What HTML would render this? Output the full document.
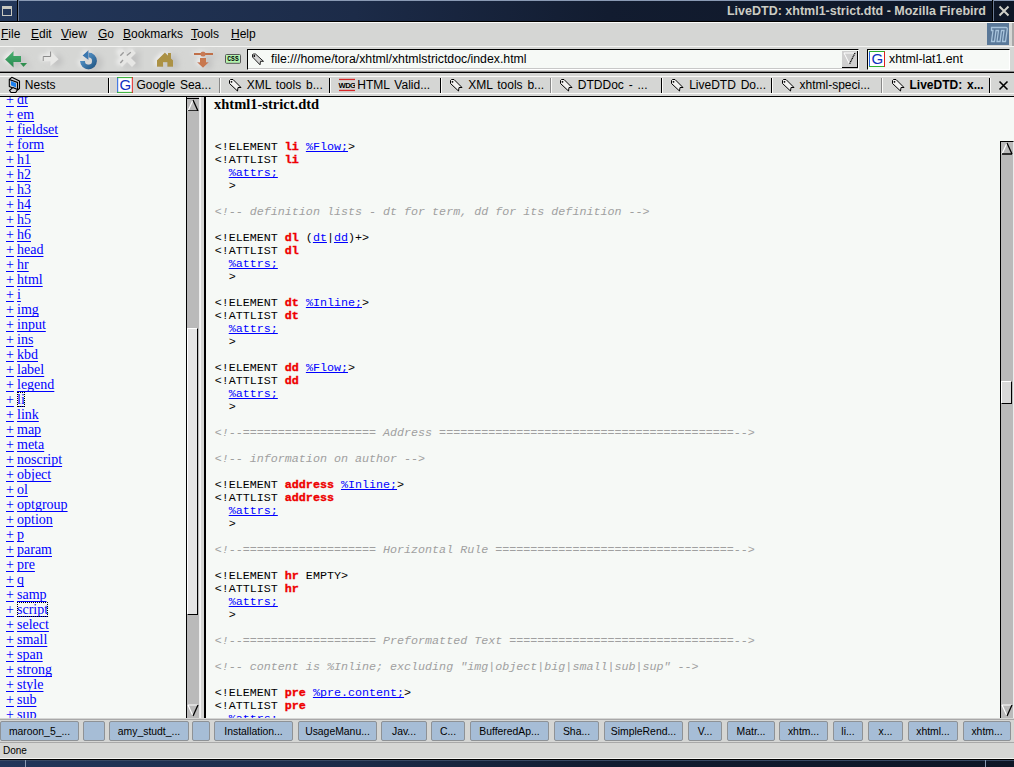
<!DOCTYPE html>
<html><head><meta charset="utf-8">
<style>
*{box-sizing:border-box}
html,body{margin:0;padding:0;width:1014px;height:767px;overflow:hidden;background:#d5d6d4;font-family:"Liberation Sans",sans-serif}
.a{position:absolute}
#title{left:0;top:0;width:1014px;height:22px;background:linear-gradient(90deg,#23375a 0%,#1c2b48 35%,#121c30 60%,#0e1626 100%);border-top:1px solid #8a9ab4;border-bottom:1px solid #000}
#ttext{right:28px;top:3px;color:#ccccc4;font:bold 12.5px "Liberation Sans",sans-serif;white-space:nowrap}
#menubar{left:0;top:22px;width:1014px;height:24px;background:#d5d6d4;border-top:1px solid #fafaf8}
.menu{top:4px;font-size:12px;color:#000;white-space:nowrap}
.menu u{text-decoration:underline;text-underline-offset:1px}
#toolbar{left:0;top:46px;width:1014px;height:26px;background:#d5d6d4;border-top:1px solid #f4f4f2;border-bottom:1px solid #888}
#tabbar{left:0;top:72px;width:1014px;height:25px;background:#d5d6d4;border-top:1px solid #000;border-bottom:1px solid #000}
#tabhl{left:0;top:76px;width:990px;height:1px;background:#fafaf8}
#tabhl2{left:0;top:93px;width:1014px;height:1px;background:#fafaf8}
.ti{top:74px;width:22px;height:22px}
.tt{top:78px;font-size:12px;white-space:nowrap;color:#000;word-spacing:1.5px}
.tsep{top:78px;width:1px;height:15px}
.tsep.dk{background:#000}
.tsep.lt{background:#888}
.tsep.wh{background:#fafaf8}
#side{left:0;top:97px;width:186px;height:621px;background:#f6f9f6;overflow:hidden}
.sl{position:absolute;left:6px;font:14px "Liberation Serif",serif;color:#0000ff;white-space:nowrap}
.sl span{text-decoration:underline;text-underline-offset:2px;text-decoration-skip-ink:none}
.sl.sn{left:17px}
.sl .foc{outline:1px dotted #000;outline-offset:-1px}
#content{left:206px;top:141px;width:794px;height:577px;background:#f6f9f6;overflow:hidden}
#topframe{left:206px;top:97px;width:808px;height:44px;background:#f6f9f6}
pre{position:absolute;left:8.7px;top:0;margin:0;font:11.7px/13px "Liberation Mono",monospace;color:#000}
pre i{-webkit-text-stroke:0}
pre a{-webkit-text-stroke:0}
pre b{-webkit-text-stroke:.35px #e00}
pre b{color:#ee0000}
pre a{color:#0000ff;text-decoration:underline;text-decoration-skip-ink:none}
pre i{color:#a0a0a0}
#taskbar{left:0;top:719px;width:1014px;height:24px;background:#d5d6d4;border-top:1px solid #a8a8a8;border-bottom:1px solid #a8a8a8}
.tb{top:721px;height:20px;background:#a6bdd6;border:1px solid #8e9296;border-radius:2px;font-size:10.4px;text-align:center;line-height:20px;color:#000;white-space:nowrap}
#status{left:0;top:743px;width:1014px;height:15px;background:#d5d6d4}
#bottom{left:0;top:758px;width:1014px;height:9px;background:linear-gradient(90deg,#22365a 0%,#1c2b48 35%,#121c30 60%,#0e1626 100%);border-top:1px solid #f4f4f2}
#bottom:before{content:"";position:absolute;left:0;top:0;width:1014px;height:1px;background:#000}
#bottom:after{content:"";position:absolute;left:0;top:1px;width:1014px;height:1px;background:#3a4a64}

</style></head><body>
<div id="title" class="a">
  <div class="a" style="left:2px;top:5px;width:10px;height:10px;border:1px solid #c8c8c0;border-top-width:3px"></div>
  <div class="a" style="left:17px;top:-1px;width:1px;height:21px;background:#000"></div>
  <div class="a" style="left:18px;top:-1px;width:1px;height:21px;background:#6a7a94"></div>
  <div id="ttext" class="a">LiveDTD: xhtml1-strict.dtd - Mozilla Firebird</div>
  <div class="a" style="left:992px;top:-1px;width:1px;height:21px;background:#000"></div>
  <div class="a" style="left:993px;top:-1px;width:1px;height:21px;background:#6a7a94"></div>
  <svg class="a" style="left:994px;top:-1px" width="20" height="21" viewBox="0 0 20 21"><path d="M5.5 6.5 L14.5 15.5 M14.5 6.5 L5.5 15.5" stroke="#d0d0c8" stroke-width="2"/></svg>
</div>
<div id="menubar" class="a">
  <div class="a menu" style="left:1px"><u>F</u>ile</div>
  <div class="a menu" style="left:31px"><u>E</u>dit</div>
  <div class="a menu" style="left:61px"><u>V</u>iew</div>
  <div class="a menu" style="left:98px"><u>G</u>o</div>
  <div class="a menu" style="left:123px"><u>B</u>ookmarks</div>
  <div class="a menu" style="left:191px"><u>T</u>ools</div>
  <div class="a menu" style="left:231px"><u>H</u>elp</div>
  <svg class="a" style="left:987px;top:0px" width="22" height="22" viewBox="0 0 22 22"><rect width="22" height="22" fill="#5a7898"/><path d="M4.5 4.5 L19 4.5 Q20.5 4.5 20.2 6.5 L18.5 18.5 L15.5 18.5 L17 7.5 L14.5 7.5 L13 18.5 L10 18.5 L11.5 7.5 L9 7.5 L7.5 18.5 L4.5 18.5 L6 7.5 L4.5 7.5 Z" fill="none" stroke="#a8c4dc" stroke-width="1.3"/></svg>
  <div class="a" style="left:1012px;top:0;width:2px;height:24px;background:#a8a8a8"></div>
</div>
<div id="toolbar" class="a">
  <div class="a" style="left:247px;top:2px;width:612px;height:21px;background:#f6f9f6;border-top:1px solid #000;border-left:1px solid #000;border-bottom:1px solid #fff;border-right:1px solid #fff"></div>
  <div class="a" style="left:248px;top:21px;width:610px;height:1px;background:#c8c8c8"></div>
  <svg class="a" style="left:248px;top:4px" width="20" height="18" viewBox="0 0 20 18"><path d="M4.5 3.5 L4.5 6 L12 13.8 L12.5 10.3 L15.5 10.3 L7.5 3 L5.5 3 Z" fill="#d4d4d4" stroke="#222" stroke-width="1"/><circle cx="6.3" cy="5" r=".9" fill="#000"/></svg>
  <div class="a" style="left:271px;top:5px;font-size:12.3px;white-space:nowrap">file:///home/tora/xhtml/xhtmlstrictdoc/index.html</div>
  <div class="a" style="left:842px;top:4px;width:16px;height:17px;background:#cfcfcf;border-right:1px solid #000;border-bottom:1px solid #000"></div>
  <svg class="a" style="left:842px;top:4px" width="16" height="17" viewBox="0 0 16 17"><path d="M2 2 L7.5 13" stroke="#fff" stroke-width="1"/><path d="M2 2 L13 2" stroke="#fff" stroke-width="1"/><path d="M13 2 L7.5 13" stroke="#000" stroke-width="1.2" stroke-dasharray="1.2 .6"/></svg>
  <div class="a" style="left:867px;top:2px;width:143px;height:21px;background:#f6f9f6;border-top:1px solid #000;border-left:1px solid #000;border-bottom:1px solid #fff;border-right:1px solid #fff"></div>
  <svg class="a" style="left:869px;top:4px" width="16" height="16" viewBox="0 0 16 16"><rect x="0.5" y="0.5" width="15" height="15" fill="#fff"/><path d="M0.5 0 V16" stroke="#2060e0"/><path d="M0 0.5 H16 M0 15.5 H16" stroke="#30b030"/><path d="M15.5 0.5 V16" stroke="#e02020"/><text x="8.3" y="13.3" font-family="Liberation Sans" font-size="15" fill="#1030c0" text-anchor="middle">G</text></svg>
  <div class="a" style="left:889px;top:5px;font-size:12.3px;white-space:nowrap">xhtml-lat1.ent</div>
</div>
<svg class="a" style="left:0;top:46px" width="246" height="25" viewBox="0 46 246 25">
<defs>
<filter id="ds" x="-100%" y="-100%" width="300%" height="300%"><feColorMatrix in="SourceAlpha" type="matrix" values="0 0 0 0 0.5  0 0 0 0 0.5  0 0 0 0 0.5  0 0 0 1 0" result="a"/><feOffset in="a" dx="5" dy="2" result="o"/><feGaussianBlur in="o" stdDeviation="3" result="b"/><feColorMatrix in="SourceAlpha" type="matrix" values="0 0 0 0 1  0 0 0 0 1  0 0 0 0 1  0 0 0 .7 0" result="w"/><feOffset in="w" dx="-2" dy="-1" result="wo"/><feGaussianBlur in="wo" stdDeviation="2" result="wb"/><feMerge><feMergeNode in="wb"/><feMergeNode in="b"/><feMergeNode in="SourceGraphic"/></feMerge></filter>
<linearGradient id="gr" x1="0" y1="0" x2="0" y2="1"><stop offset="0" stop-color="#48b070"/><stop offset="1" stop-color="#2a8a50"/></linearGradient>
<linearGradient id="bl" x1="0" y1="0" x2="1" y2="1"><stop offset="0" stop-color="#5a9ad0"/><stop offset="1" stop-color="#245a88"/></linearGradient>
</defs>
<g filter="url(#ds)">
<path d="M5 59.4 L13.6 51 L13.6 56 L21 56 L21 62 L13.6 62 L13.6 67.5 Z" fill="url(#gr)"/>
<path d="M20 63 L27.2 63 L23.5 67 Z" fill="#2e9050"/>
</g>
<g filter="url(#ds)">
<path d="M43 56.3 L50.4 56.3 L50.4 51.1 L58.6 59.2 L50.4 66.1 L50.4 61.2 L43 61.2 Z" fill="#e8e8e6"/><path d="M43.2 61 L43.2 56.5 L50.6 56.5 L50.6 51.5" fill="none" stroke="#8a8a8a" stroke-width="1"/>
</g>
<g filter="url(#ds)">
<path d="M82.5 61 A6 6 0 1 0 88.5 55" fill="none" stroke="url(#bl)" stroke-width="5"/>
<path d="M88.5 50 L88.5 60 L82.5 55.5 Z" fill="#3a78b0"/>
</g>
<g filter="url(#ds)">
<path d="M122 53 L132 63 M132 53 L122 63" stroke="#e6e6e4" stroke-width="5.5" stroke-linecap="square"/>
<g stroke="#9a9a9a" stroke-width="1.3" fill="none"><path d="M120.3 55.7 L123.7 52.2"/><path d="M126.8 55.5 L130.8 52.3"/><path d="M120.3 63 L123 60"/></g>
</g>
<g filter="url(#ds)">
<path d="M157 60.2 L164.9 52.6 L168 55.5 L168 53 L171 53 L171 58.5 L173 60.2 L173 66.7 L167.3 66.7 L167.3 62.2 L163.1 62.2 L163.1 66.7 L157 66.7 Z" fill="#ac9244"/>
</g>
<g filter="url(#ds)">
<path d="M194 53 L213 53 L213 55 L194 55 Z" fill="#c07048"/>
<circle cx="203" cy="54" r="2.6" fill="#c87a54"/>
<path d="M200 58 L206 58 L206 62.2 L208.8 62.2 L203 67.7 L197 62.2 L200 62.2 Z" fill="#c87850"/>
</g>
<rect x="225.5" y="54.5" width="15" height="8.8" rx="1" fill="#b4f4b0" stroke="#585858"/>
<text x="233" y="61.3" font-family="Liberation Mono" font-weight="bold" font-size="6.3" text-anchor="middle" fill="#000">CSS</text>
</svg>

<div id="tabbar" class="a"></div><div id="tabhl" class="a"></div><div id="tabhl2" class="a"></div>
<svg class="a" style="left:998px;top:80px" width="11" height="11" viewBox="0 0 11 11"><path d="M1.5 1.5 L9.5 9.5 M9.5 1.5 L1.5 9.5" stroke="#000" stroke-width="1.6"/></svg>
<div class="a ti" style="left:0px"><svg width="22" height="22" viewBox="0 0 22 22"><path d="M9.3 5.5 L11.8 3.3 L19.5 7 L19.5 14.5 L17.5 16 L9.3 12.5 Z" fill="#cfcfcf" stroke="#000" stroke-width="1.1" stroke-linejoin="round"/><path d="M9.3 5.5 L17.5 8.5 L17.5 16" fill="none" stroke="#000" stroke-width="1.1"/><path d="M11 7 L16 9.3 L16 13.5 L11 11.2 Z" fill="#1a80f0"/><path d="M9.5 16.5 L12.8 13.6 L17.5 15.5 L15.8 18.5 L11 18.5 Z" fill="#d4d4d4" stroke="#000" stroke-width="1.1" stroke-linejoin="round"/></svg></div>
<div class="a tt" style="left:24.8px;">Nests</div>
<div class="a tsep dk" style="left:108px"></div><div class="a tsep wh" style="left:109px"></div>
<div class="a ti" style="left:112px"><svg width="22" height="22" viewBox="0 0 22 22"><rect x="5.5" y="3.5" width="15" height="15" fill="#fff"/><path d="M5.7 3 V19" stroke="#2060e0"/><path d="M5 3.6 H21 M5 18.4 H21" stroke="#30b030"/><path d="M20.3 3 V19" stroke="#e02020"/><text x="13.3" y="16.3" font-family="Liberation Sans" font-size="15" fill="#1030c0" text-anchor="middle">G</text></svg></div>
<div class="a tt" style="left:136.4px;">Google Sea...</div>
<div class="a tsep lt" style="left:219px"></div><div class="a tsep wh" style="left:220px"></div>
<div class="a ti" style="left:222px"><svg width="22" height="22" viewBox="0 0 22 22"><path d="M7.5 6.5 L7.5 9.5 L15.5 17 L16 13.5 L19 13.5 L11 5.5 L8.5 5.5 Z" fill="#f2f2f0" stroke="#000" stroke-width="1"/><circle cx="9.5" cy="7.8" r=".9" fill="#000"/></svg></div>
<div class="a tt" style="left:246.8px;">XML tools b...</div>
<div class="a tsep dk" style="left:329px"></div><div class="a tsep wh" style="left:330px"></div>
<div class="a ti" style="left:333px"><svg width="22" height="22" viewBox="0 0 22 22"><rect x="6" y="4.8" width="16" height="1.3" fill="#d82828"/><rect x="6" y="15.8" width="16" height="1.3" fill="#d82828"/><text x="14" y="13.8" font-family="Liberation Sans" font-weight="bold" font-size="7.6" letter-spacing="-.6" fill="#000" text-anchor="middle">WDG</text></svg></div>
<div class="a tt" style="left:357.3px;">HTML Valid...</div>
<div class="a tsep dk" style="left:440px"></div><div class="a tsep wh" style="left:441px"></div>
<div class="a ti" style="left:443px"><svg width="22" height="22" viewBox="0 0 22 22"><path d="M7.5 6.5 L7.5 9.5 L15.5 17 L16 13.5 L19 13.5 L11 5.5 L8.5 5.5 Z" fill="#f2f2f0" stroke="#000" stroke-width="1"/><circle cx="9.5" cy="7.8" r=".9" fill="#000"/></svg></div>
<div class="a tt" style="left:468.2px;">XML tools b...</div>
<div class="a tsep lt" style="left:550px"></div><div class="a tsep wh" style="left:551px"></div>
<div class="a ti" style="left:553px"><svg width="22" height="22" viewBox="0 0 22 22"><path d="M7.5 6.5 L7.5 9.5 L15.5 17 L16 13.5 L19 13.5 L11 5.5 L8.5 5.5 Z" fill="#f2f2f0" stroke="#000" stroke-width="1"/><circle cx="9.5" cy="7.8" r=".9" fill="#000"/></svg></div>
<div class="a tt" style="left:577.8px;">DTDDoc - ...</div>
<div class="a tsep dk" style="left:661px"></div><div class="a tsep wh" style="left:662px"></div>
<div class="a ti" style="left:664px"><svg width="22" height="22" viewBox="0 0 22 22"><path d="M7.5 6.5 L7.5 9.5 L15.5 17 L16 13.5 L19 13.5 L11 5.5 L8.5 5.5 Z" fill="#f2f2f0" stroke="#000" stroke-width="1"/><circle cx="9.5" cy="7.8" r=".9" fill="#000"/></svg></div>
<div class="a tt" style="left:689.2px;">LiveDTD Do...</div>
<div class="a tsep dk" style="left:771px"></div><div class="a tsep wh" style="left:772px"></div>
<div class="a ti" style="left:775px"><svg width="22" height="22" viewBox="0 0 22 22"><path d="M7.5 6.5 L7.5 9.5 L15.5 17 L16 13.5 L19 13.5 L11 5.5 L8.5 5.5 Z" fill="#f2f2f0" stroke="#000" stroke-width="1"/><circle cx="9.5" cy="7.8" r=".9" fill="#000"/></svg></div>
<div class="a tt" style="left:799.5px;">xhtml-speci...</div>
<div class="a tsep lt" style="left:881px"></div><div class="a tsep wh" style="left:882px"></div>
<div class="a ti" style="left:885px"><svg width="22" height="22" viewBox="0 0 22 22"><path d="M7.5 6.5 L7.5 9.5 L15.5 17 L16 13.5 L19 13.5 L11 5.5 L8.5 5.5 Z" fill="#f2f2f0" stroke="#000" stroke-width="1"/><circle cx="9.5" cy="7.8" r=".9" fill="#000"/></svg></div>
<div class="a tt" style="left:909.5px;font-weight:bold;">LiveDTD: x...</div>
<div class="a tsep dk" style="left:989px"></div><div class="a tsep wh" style="left:990px"></div>
<div id="side" class="a">
<div class="sl" style="top:-4.8px"><span>+</span></div><div class="sl sn" style="top:-4.8px"><span>dt</span></div>
<div class="sl" style="top:10.2px"><span>+</span></div><div class="sl sn" style="top:10.2px"><span>em</span></div>
<div class="sl" style="top:25.2px"><span>+</span></div><div class="sl sn" style="top:25.2px"><span>fieldset</span></div>
<div class="sl" style="top:40.2px"><span>+</span></div><div class="sl sn" style="top:40.2px"><span>form</span></div>
<div class="sl" style="top:55.2px"><span>+</span></div><div class="sl sn" style="top:55.2px"><span>h1</span></div>
<div class="sl" style="top:70.2px"><span>+</span></div><div class="sl sn" style="top:70.2px"><span>h2</span></div>
<div class="sl" style="top:85.2px"><span>+</span></div><div class="sl sn" style="top:85.2px"><span>h3</span></div>
<div class="sl" style="top:100.2px"><span>+</span></div><div class="sl sn" style="top:100.2px"><span>h4</span></div>
<div class="sl" style="top:115.2px"><span>+</span></div><div class="sl sn" style="top:115.2px"><span>h5</span></div>
<div class="sl" style="top:130.2px"><span>+</span></div><div class="sl sn" style="top:130.2px"><span>h6</span></div>
<div class="sl" style="top:145.2px"><span>+</span></div><div class="sl sn" style="top:145.2px"><span>head</span></div>
<div class="sl" style="top:160.2px"><span>+</span></div><div class="sl sn" style="top:160.2px"><span>hr</span></div>
<div class="sl" style="top:175.2px"><span>+</span></div><div class="sl sn" style="top:175.2px"><span>html</span></div>
<div class="sl" style="top:190.2px"><span>+</span></div><div class="sl sn" style="top:190.2px"><span>i</span></div>
<div class="sl" style="top:205.2px"><span>+</span></div><div class="sl sn" style="top:205.2px"><span>img</span></div>
<div class="sl" style="top:220.2px"><span>+</span></div><div class="sl sn" style="top:220.2px"><span>input</span></div>
<div class="sl" style="top:235.2px"><span>+</span></div><div class="sl sn" style="top:235.2px"><span>ins</span></div>
<div class="sl" style="top:250.2px"><span>+</span></div><div class="sl sn" style="top:250.2px"><span>kbd</span></div>
<div class="sl" style="top:265.2px"><span>+</span></div><div class="sl sn" style="top:265.2px"><span>label</span></div>
<div class="sl" style="top:280.2px"><span>+</span></div><div class="sl sn" style="top:280.2px"><span>legend</span></div>
<div class="sl" style="top:295.2px"><span>+</span></div><div class="sl sn" style="top:295.2px"><span class="foc">li</span></div>
<div class="sl" style="top:310.2px"><span>+</span></div><div class="sl sn" style="top:310.2px"><span>link</span></div>
<div class="sl" style="top:325.2px"><span>+</span></div><div class="sl sn" style="top:325.2px"><span>map</span></div>
<div class="sl" style="top:340.2px"><span>+</span></div><div class="sl sn" style="top:340.2px"><span>meta</span></div>
<div class="sl" style="top:355.2px"><span>+</span></div><div class="sl sn" style="top:355.2px"><span>noscript</span></div>
<div class="sl" style="top:370.2px"><span>+</span></div><div class="sl sn" style="top:370.2px"><span>object</span></div>
<div class="sl" style="top:385.2px"><span>+</span></div><div class="sl sn" style="top:385.2px"><span>ol</span></div>
<div class="sl" style="top:400.2px"><span>+</span></div><div class="sl sn" style="top:400.2px"><span>optgroup</span></div>
<div class="sl" style="top:415.2px"><span>+</span></div><div class="sl sn" style="top:415.2px"><span>option</span></div>
<div class="sl" style="top:430.2px"><span>+</span></div><div class="sl sn" style="top:430.2px"><span>p</span></div>
<div class="sl" style="top:445.2px"><span>+</span></div><div class="sl sn" style="top:445.2px"><span>param</span></div>
<div class="sl" style="top:460.2px"><span>+</span></div><div class="sl sn" style="top:460.2px"><span>pre</span></div>
<div class="sl" style="top:475.2px"><span>+</span></div><div class="sl sn" style="top:475.2px"><span>q</span></div>
<div class="sl" style="top:490.2px"><span>+</span></div><div class="sl sn" style="top:490.2px"><span>samp</span></div>
<div class="sl" style="top:505.2px"><span>+</span></div><div class="sl sn" style="top:505.2px"><span class="foc">script</span></div>
<div class="sl" style="top:520.2px"><span>+</span></div><div class="sl sn" style="top:520.2px"><span>select</span></div>
<div class="sl" style="top:535.2px"><span>+</span></div><div class="sl sn" style="top:535.2px"><span>small</span></div>
<div class="sl" style="top:550.2px"><span>+</span></div><div class="sl sn" style="top:550.2px"><span>span</span></div>
<div class="sl" style="top:565.2px"><span>+</span></div><div class="sl sn" style="top:565.2px"><span>strong</span></div>
<div class="sl" style="top:580.2px"><span>+</span></div><div class="sl sn" style="top:580.2px"><span>style</span></div>
<div class="sl" style="top:595.2px"><span>+</span></div><div class="sl sn" style="top:595.2px"><span>sub</span></div>
<div class="sl" style="top:610.2px"><span>+</span></div><div class="sl sn" style="top:610.2px"><span>sup</span></div>
</div>
<div class="a" style="left:186px;top:97px;width:14px;height:621px;background:#bababa;border-left:1px solid #000"></div>
<div class="a" style="left:199px;top:97px;width:1px;height:621px;background:#eee"></div>
<div class="a" style="left:187px;top:97px;width:12px;height:1px;background:#c4c4c4"></div><div class="a" style="left:186px;top:98px;width:13px;height:1px;background:#000"></div>
<svg class="a" style="left:187px;top:99px" width="12" height="12" viewBox="0 0 12 12"><path d="M1 12 L6 1" stroke="#fff" stroke-width="1.2"/><path d="M6 1 L11 12 M1 12 L11 12" stroke="#000" stroke-width="1.3"/></svg>
<div class="a" style="left:187px;top:328px;width:11px;height:287px;background:#e4e4e4;border-top:1px solid #fff;border-left:1px solid #fff;border-right:1px solid #000;border-bottom:1px solid #000"></div>
<svg class="a" style="left:187px;top:704px" width="12" height="13" viewBox="0 0 12 13"><path d="M1 1 L11 1 M1 1 L6 12" stroke="#fff" stroke-width="1.2"/><path d="M11 1 L6 12" stroke="#000" stroke-width="1.3"/></svg>
<div class="a" style="left:200px;top:97px;width:6px;height:621px;background:#d5d6d4;border-left:1px solid #f4f4f4;border-right:2px solid #000"></div>
<div id="topframe" class="a"><div class="a" style="left:8px;top:-1px;font:bold 14.5px 'Liberation Serif',serif">xhtml1-strict.dtd</div></div>
<div id="content" class="a"><pre>
&lt;!ELEMENT <b>li</b> <a>%Flow;</a>&gt;
&lt;!ATTLIST <b>li</b>
  <a>%attrs;</a>
  &gt;

<i>&lt;!-- definition lists - dt for term, dd for its definition --&gt;</i>

&lt;!ELEMENT <b>dl</b> (<a>dt</a>|<a>dd</a>)+&gt;
&lt;!ATTLIST <b>dl</b>
  <a>%attrs;</a>
  &gt;

&lt;!ELEMENT <b>dt</b> <a>%Inline;</a>&gt;
&lt;!ATTLIST <b>dt</b>
  <a>%attrs;</a>
  &gt;

&lt;!ELEMENT <b>dd</b> <a>%Flow;</a>&gt;
&lt;!ATTLIST <b>dd</b>
  <a>%attrs;</a>
  &gt;

<i>&lt;!--=================== Address ==========================================--&gt;</i>

<i>&lt;!-- information on author --&gt;</i>

&lt;!ELEMENT <b>address</b> <a>%Inline;</a>&gt;
&lt;!ATTLIST <b>address</b>
  <a>%attrs;</a>
  &gt;

<i>&lt;!--=================== Horizontal Rule ==================================--&gt;</i>

&lt;!ELEMENT <b>hr</b> EMPTY&gt;
&lt;!ATTLIST <b>hr</b>
  <a>%attrs;</a>
  &gt;

<i>&lt;!--=================== Preformatted Text ================================--&gt;</i>

<i>&lt;!-- content is %Inline; excluding &quot;img|object|big|small|sub|sup&quot; --&gt;</i>

&lt;!ELEMENT <b>pre</b> <a>%pre.content;</a>&gt;
&lt;!ATTLIST <b>pre</b>
  <a>%attrs;</a></pre></div>
<div class="a" style="left:1000px;top:141px;width:14px;height:577px;background:#bababa;border-left:1px solid #000;border-top:1px solid #000;border-right:1px solid #ececec"></div>
<svg class="a" style="left:1001px;top:142px" width="12" height="13" viewBox="0 0 12 13"><path d="M1 12 L6 1" stroke="#fff" stroke-width="1.2"/><path d="M6 1 L11 12 M1 12 L11 12" stroke="#000" stroke-width="1.3"/></svg>
<div class="a" style="left:1001px;top:381px;width:11px;height:23px;background:#d8d8d8;border-top:1px solid #fff;border-left:1px solid #fff;border-right:1px solid #000;border-bottom:1px solid #000"></div>
<svg class="a" style="left:1001px;top:704px" width="12" height="13" viewBox="0 0 12 13"><path d="M1 1 L11 1 M1 1 L6 12" stroke="#fff" stroke-width="1.2"/><path d="M11 1 L6 12" stroke="#000" stroke-width="1.3"/></svg>
<div id="taskbar" class="a"></div>
<div class="tb a" style="left:0px;width:79px">maroon_5_...</div>
<div class="tb a" style="left:83px;width:22px"></div>
<div class="tb a" style="left:109px;width:80px">amy_studt_...</div>
<div class="tb a" style="left:192px;width:18px"></div>
<div class="tb a" style="left:214px;width:79px">Installation...</div>
<div class="tb a" style="left:298px;width:79px">UsageManu...</div>
<div class="tb a" style="left:381px;width:46px">Jav...</div>
<div class="tb a" style="left:431px;width:34px">C...</div>
<div class="tb a" style="left:470px;width:79px">BufferedAp...</div>
<div class="tb a" style="left:554px;width:45px">Sha...</div>
<div class="tb a" style="left:604px;width:79px">SimpleRend...</div>
<div class="tb a" style="left:688px;width:34px">V...</div>
<div class="tb a" style="left:727px;width:48px">Matr...</div>
<div class="tb a" style="left:779px;width:49px">xhtm...</div>
<div class="tb a" style="left:833px;width:30px">li...</div>
<div class="tb a" style="left:868px;width:35px">x...</div>
<div class="tb a" style="left:908px;width:50px">xhtml...</div>
<div class="tb a" style="left:963px;width:48px">xhtm...</div>
<div id="status" class="a"><div class="a" style="left:3px;top:2px;font-size:10px">Done</div></div>
<div id="bottom" class="a"><div class="a" style="left:25px;top:1px;width:1px;height:8px;background:#8a9ab4;z-index:2"></div><div class="a" style="left:985px;top:1px;width:1px;height:8px;background:#8a9ab4;z-index:2"></div></div>
</body></html>
